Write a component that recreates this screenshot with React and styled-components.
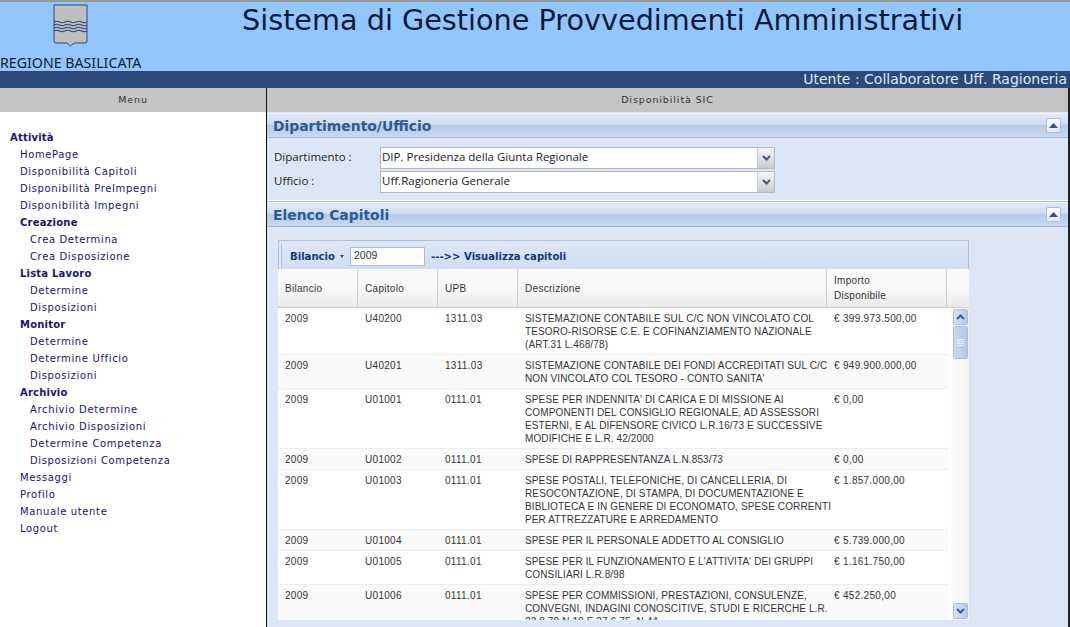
import React from 'react';
import styled, { createGlobalStyle } from 'styled-components';

const GlobalStyle = createGlobalStyle`
  html, body {
    margin: 0;
    padding: 0;
    height: 100%;
    overflow: hidden;
    background: #ffffff;
  }

  #root {
    height: 100%;
  }
`;

const Page = styled.div`
  display: flex;
  flex-direction: column;
  width: 1070px;
  height: 627px;
  overflow: hidden;
  font-family: "DejaVu Sans", sans-serif;
`;

const Banner = styled.header`
  display: flex;
  height: 71px;
  flex: none;
  box-sizing: border-box;
  border-top: 2px solid #9a9a94;
  background: #93c6ff;
`;

const Brand = styled.div`
  display: flex;
  flex-direction: column;
  width: 142px;
  flex: none;
  padding-top: 2px;
`;

const CrestSlot = styled.div`
  height: 44px;
  padding-left: 53px;
`;

const BrandName = styled.div`
  margin-top: 7px;
  font-family: "Noto Sans", sans-serif;
  font-size: 14.2px;
  line-height: 16px;
  white-space: nowrap;
  color: #101a2c;
`;

const Title = styled.h1`
  margin: 0;
  padding: 2px 0 0 100px;
  font-size: 28.7px;
  line-height: 33px;
  font-weight: 400;
  white-space: nowrap;
  color: #0c1a33;
`;

const UserBar = styled.div`
  height: 17px;
  flex: none;
  padding-right: 3px;
  background: #2a4a7c;
  color: #dfe9f7;
  font-size: 14px;
  line-height: 17px;
  text-align: right;
  white-space: nowrap;
`;

const Columns = styled.div`
  display: flex;
  flex: 1;
  min-height: 0;
`;

const Sidebar = styled.aside`
  display: flex;
  flex-direction: column;
  width: 266px;
  flex: none;
  border-right: 1px solid #111111;
`;

const ColumnTitle = styled.div`
  height: 24px;
  flex: none;
  background: #c4c4c4;
  color: #333333;
  font-size: 9.5px;
  letter-spacing: 0.9px;
  line-height: 24px;
  text-align: center;
`;

const MenuList = styled.nav`
  display: flex;
  flex-direction: column;
  padding-top: 17px;
`;

const MenuItem = styled.a`
  height: 17px;
  padding-left: ${({ $level }) => 10 + $level * 10}px;
  color: #1c1273;
  font-size: 10px;
  font-weight: ${({ $bold }) => ($bold ? 700 : 400)};
  letter-spacing: ${({ $bold }) => ($bold ? 0.2 : 0.64)}px;
  line-height: 17px;
  white-space: nowrap;
`;

const Main = styled.main`
  display: flex;
  flex-direction: column;
  flex: 1;
  min-width: 0;
  box-sizing: border-box;
  border-right: 2px solid #222222;
  background: #dde6f6;
`;

const PanelHeader = styled.div`
  display: flex;
  align-items: center;
  justify-content: space-between;
  height: 25px;
  flex: none;
  margin-top: ${({ $first }) => ($first ? '1px' : '0')};
  padding: 0 7px 0 6px;
  box-sizing: border-box;
  border-top: 1px solid #f2f6fc;
  border-bottom: 1px solid #a3b9da;
  background: linear-gradient(#e0e9f7 0, #d0ddf1 45%, #b6cbe9 48%, #c8d8ef 100%);
`;

const PanelTitle = styled.div`
  color: #2f5a94;
  font-size: 13.9px;
  font-weight: 700;
  white-space: nowrap;
`;

const CollapseButton = styled.button`
  display: flex;
  align-items: center;
  justify-content: center;
  width: 15px;
  height: 15px;
  padding: 0;
  border: 1px solid #a9bedd;
  border-radius: 2px;
  background: linear-gradient(#ffffff, #dfe8f6);
`;

const FormBody = styled.div`
  display: flex;
  flex-direction: column;
  gap: 2px;
  height: 63px;
  flex: none;
  padding: 9px 0 0 7px;
  box-sizing: border-box;
  border-bottom: 1px solid #ffffff;
  box-shadow: 0 1px 0 #a9bedd;
  margin-bottom: 1px;
`;

const FormRow = styled.div`
  display: flex;
  align-items: center;
  height: 22px;
`;

const FieldLabel = styled.label`
  width: 106px;
  flex: none;
  padding-bottom: 4px;
  color: #222222;
  font-family: "Open Sans", sans-serif;
  font-size: 11.5px;
`;

const Combo = styled.div`
  display: flex;
  width: 395px;
  height: 100%;
  box-sizing: border-box;
  border: 1px solid #b4b8be;
  background: #ffffff;
`;

const ComboValue = styled.div`
  flex: 1;
  padding-left: 1px;
  color: #222222;
  font-family: "Open Sans", sans-serif;
  font-size: 11.5px;
  line-height: 18px;
  white-space: nowrap;
`;

const ComboArrow = styled.div`
  display: flex;
  align-items: center;
  justify-content: center;
  width: 16px;
  border-left: 1px solid #c5cbd4;
  background: linear-gradient(#f4f5f7, #c8ccc8);
`;

const GridPanelBody = styled.div`
  flex: 1;
  min-height: 0;
  padding: 13px 0 0 11px;
`;

const Grid = styled.section`
  display: flex;
  flex-direction: column;
  width: 691px;
  height: 380px;
`;

const ToolbarFrame = styled.div`
  height: 29px;
  flex: none;
  padding: 3px 0 0 2px;
  box-sizing: border-box;
  border: 1px solid #a9c0e0;
  border-bottom: 0;
`;

const Toolbar = styled.div`
  display: flex;
  align-items: center;
  height: 25px;
  padding-left: 8px;
  box-sizing: border-box;
  border-left: 1px solid #a9c0e0;
  background: linear-gradient(#dbe6f7, #cfdef3);
  color: #15367f;
  font-size: 10.1px;
  font-weight: 700;
  white-space: nowrap;
`;

const ToolbarCaret = styled.span`
  margin: 0 6px 0 5px;
  border-top: 3px solid #444444;
  border-left: 2.500px solid transparent;
  border-right: 2.500px solid transparent;
`;

const YearInput = styled.div`
  width: 75px;
  height: 19px;
  margin-right: 6px;
  padding-left: 3px;
  box-sizing: border-box;
  border: 1px solid #a9bedd;
  background: #ffffff;
  color: #333333;
  font-family: "Liberation Sans", sans-serif;
  font-size: 10.5px;
  font-weight: 400;
  line-height: 15px;
`;

const HeadRow = styled.div`
  display: flex;
  height: 39px;
  flex: none;
  box-sizing: border-box;
  border-bottom: 1px solid #cfcfcf;
  background: linear-gradient(#f9f9f9 0, #f9f9f9 50%, #e9e9e9 100%);
`;

const HeadCell = styled.div`
  display: flex;
  align-items: center;
  width: ${({ $width }) => $width}px;
  flex: none;
  padding: 0 6px 0 7px;
  box-sizing: border-box;
  border-right: 1px solid #d0d0d0;
  color: #333333;
  font-family: "Liberation Sans", sans-serif;
  font-size: 10px;
  letter-spacing: 0.3px;
  line-height: 15px;
`;

const HeadFiller = styled.div`
  flex: 1;
`;

const GridBody = styled.div`
  display: flex;
  flex: 1;
  min-height: 0;
  background: #ffffff;
`;

const RowsViewport = styled.div`
  width: 670px;
  flex: none;
  overflow: hidden;
`;

const Row = styled.div`
  display: flex;
  border-bottom: 1px solid #ededed;
  background: ${({ $alt }) => ($alt ? '#fafafa' : '#ffffff')};
`;

const Cell = styled.div`
  width: ${({ $width }) => $width}px;
  flex: none;
  padding: 4px 0 3px 7px;
  box-sizing: border-box;
  color: #333333;
  font-family: "Liberation Sans", sans-serif;
  font-size: 10px;
  letter-spacing: ${({ $spacing }) => $spacing}px;
  line-height: 13px;
  white-space: nowrap;
`;

const ScrollTrack = styled.div`
  display: flex;
  flex-direction: column;
  align-items: flex-end;
  flex: 1;
  padding: 1px 1px 1px 0;
  background: linear-gradient(90deg, #ffffff, #f4f4ee);
`;

const ScrollButton = styled.div`
  display: flex;
  align-items: center;
  justify-content: center;
  width: 15px;
  height: 16px;
  flex: none;
  box-sizing: border-box;
  border: 1px solid #a9bedd;
  border-radius: 2px;
  background: linear-gradient(90deg, #d6e2f6, #b4c8ea);
`;

const ScrollThumb = styled.div`
  display: flex;
  flex-direction: column;
  align-items: center;
  justify-content: center;
  gap: 1px;
  width: 15px;
  height: 33px;
  flex: none;
  margin-top: 1px;
  box-sizing: border-box;
  border: 1px solid #a9bedd;
  border-radius: 2px;
  background: linear-gradient(90deg, #c9d8f3, #b4c8ea);
`;

const ThumbLine = styled.span`
  width: 7px;
  height: 1px;
  background: #e8effa;
`;

const ScrollSpacer = styled.div`
  flex: 1;
`;

const menu = [
  { label: 'Attività', level: 0, bold: true },
  { label: 'HomePage', level: 1 },
  { label: 'Disponibilità Capitoli', level: 1 },
  { label: 'Disponibilità PreImpegni', level: 1 },
  { label: 'Disponibilità Impegni', level: 1 },
  { label: 'Creazione', level: 1, bold: true },
  { label: 'Crea Determina', level: 2 },
  { label: 'Crea Disposizione', level: 2 },
  { label: 'Lista Lavoro', level: 1, bold: true },
  { label: 'Determine', level: 2 },
  { label: 'Disposizioni', level: 2 },
  { label: 'Monitor', level: 1, bold: true },
  { label: 'Determine', level: 2 },
  { label: 'Determine Ufficio', level: 2 },
  { label: 'Disposizioni', level: 2 },
  { label: 'Archivio', level: 1, bold: true },
  { label: 'Archivio Determine', level: 2 },
  { label: 'Archivio Disposizioni', level: 2 },
  { label: 'Determine Competenza', level: 2 },
  { label: 'Disposizioni Competenza', level: 2 },
  { label: 'Messaggi', level: 1 },
  { label: 'Profilo', level: 1 },
  { label: 'Manuale utente', level: 1 },
  { label: 'Logout', level: 1 },
];

const widths = [80, 80, 80, 309, 120];

const rows = [
  ['U40200', '1311.03', ['SISTEMAZIONE CONTABILE SUL C/C NON VINCOLATO COL', 'TESORO-RISORSE C.E. E COFINANZIAMENTO NAZIONALE', '(ART.31 L.468/78)'], '€ 399.973.500,00'],
  ['U40201', '1311.03', ['SISTEMAZIONE CONTABILE DEI FONDI ACCREDITATI SUL C/C', "NON VINCOLATO COL TESORO - CONTO SANITA'"], '€ 949.900.000,00'],
  ['U01001', '0111.01', ["SPESE PER INDENNITA' DI CARICA E DI MISSIONE AI", 'COMPONENTI DEL CONSIGLIO REGIONALE, AD ASSESSORI', 'ESTERNI, E AL DIFENSORE CIVICO L.R.16/73 E SUCCESSIVE', 'MODIFICHE E L.R. 42/2000'], '€ 0,00'],
  ['U01002', '0111.01', ['SPESE DI RAPPRESENTANZA L.N.853/73'], '€ 0,00'],
  ['U01003', '0111.01', ['SPESE POSTALI, TELEFONICHE, DI CANCELLERIA, DI', 'RESOCONTAZIONE, DI STAMPA, DI DOCUMENTAZIONE E', 'BIBLIOTECA E IN GENERE DI ECONOMATO, SPESE CORRENTI', 'PER ATTREZZATURE E ARREDAMENTO'], '€ 1.857.000,00'],
  ['U01004', '0111.01', ['SPESE PER IL PERSONALE ADDETTO AL CONSIGLIO'], '€ 5.739.000,00'],
  ['U01005', '0111.01', ["SPESE PER IL FUNZIONAMENTO E L'ATTIVITA' DEI GRUPPI", 'CONSILIARI L.R.8/98'], '€ 1.161.750,00'],
  ['U01006', '0111.01', ['SPESE PER COMMISSIONI, PRESTAZIONI, CONSULENZE,', 'CONVEGNI, INDAGINI CONOSCITIVE, STUDI E RICERCHE L.R.', '22.8.79 N.18 E 27.6.75, N.44'], '€ 452.250,00'],
];

function Crest() {
  return (
    <svg width="36" height="44" viewBox="0 0 36 44">
      <path d="M1 1h33v36q0 2-2 2H21l-3.500 3-3.500-3H3q-2 0-2-2z" fill="#bcbec0" stroke="#2d4a78" strokeWidth="1" />
      {[18, 21, 24, 27].map((y) => (
        <path
          key={y}
          d={`M1 ${y}q2.700-1.500 5.500 0t5.500 0 5.500 0 5.500 0 5.500 0 5.500 0`}
          fill="none"
          stroke="#2d4a78"
          strokeWidth="1.100"
        />
      ))}
    </svg>
  );
}

function Chevron({ up, color = '#3a5da0' }) {
  return (
    <svg width="9" height="6" viewBox="0 0 9 6">
      <path d={up ? 'M1 5l3.500-3.500L8 5' : 'M1 1l3.500 3.500L8 1'} fill="none" stroke={color} strokeWidth="2" />
    </svg>
  );
}

function PanelBar({ title, first }) {
  return (
    <PanelHeader $first={first}>
      <PanelTitle>{title}</PanelTitle>
      <CollapseButton type="button" aria-label="Comprimi">
        <svg width="9" height="5" viewBox="0 0 9 5">
          <path d="M4.500 0L9 5H0z" fill="#34508c" />
        </svg>
      </CollapseButton>
    </PanelHeader>
  );
}

function Combobox({ value }) {
  return (
    <Combo>
      <ComboValue>{value}</ComboValue>
      <ComboArrow>
        <Chevron color="#41537c" />
      </ComboArrow>
    </Combo>
  );
}

export default function App() {
  return (
    <Page>
      <GlobalStyle />
      <Banner>
        <Brand>
          <CrestSlot>
            <Crest />
          </CrestSlot>
          <BrandName>REGIONE BASILICATA</BrandName>
        </Brand>
        <Title>Sistema di Gestione Provvedimenti Amministrativi</Title>
      </Banner>
      <UserBar>Utente : Collaboratore Uff. Ragioneria</UserBar>
      <Columns>
        <Sidebar>
          <ColumnTitle>Menu</ColumnTitle>
          <MenuList>
            {menu.map((item, i) => (
              <MenuItem key={i} $level={item.level} $bold={item.bold}>
                {item.label}
              </MenuItem>
            ))}
          </MenuList>
        </Sidebar>
        <Main>
          <ColumnTitle>Disponibilità SIC</ColumnTitle>
          <PanelBar title="Dipartimento/Ufficio" first />
          <FormBody>
            <FormRow>
              <FieldLabel>Dipartimento :</FieldLabel>
              <Combobox value="DIP. Presidenza della Giunta Regionale" />
            </FormRow>
            <FormRow>
              <FieldLabel>Ufficio :</FieldLabel>
              <Combobox value="Uff.Ragioneria Generale" />
            </FormRow>
          </FormBody>
          <PanelBar title="Elenco Capitoli" />
          <GridPanelBody>
            <Grid>
              <ToolbarFrame>
                <Toolbar>
                  Bilancio
                  <ToolbarCaret />
                  <YearInput>2009</YearInput>
                  ---&gt;&gt; Visualizza capitoli
                </Toolbar>
              </ToolbarFrame>
              <HeadRow>
                <HeadCell $width={widths[0]}>Bilancio</HeadCell>
                <HeadCell $width={widths[1]}>Capitolo</HeadCell>
                <HeadCell $width={widths[2]}>UPB</HeadCell>
                <HeadCell $width={widths[3]}>Descrizione</HeadCell>
                <HeadCell $width={widths[4]}>
                  Importo
                  <br />
                  Disponibile
                </HeadCell>
                <HeadFiller />
              </HeadRow>
              <GridBody>
                <RowsViewport>
                  {rows.map(([code, upb, desc, amount], i) => (
                    <Row key={code} $alt={i % 2 === 1}>
                      <Cell $width={widths[0]} $spacing={0.3}>2009</Cell>
                      <Cell $width={widths[1]} $spacing={0.3}>{code}</Cell>
                      <Cell $width={widths[2]} $spacing={0.3}>{upb}</Cell>
                      <Cell $width={widths[3]} $spacing={0.125}>
                        {desc.map((line) => (
                          <div key={line}>{line}</div>
                        ))}
                      </Cell>
                      <Cell $width={widths[4]} $spacing={0.3}>{amount}</Cell>
                    </Row>
                  ))}
                </RowsViewport>
                <ScrollTrack>
                  <ScrollButton>
                    <Chevron up />
                  </ScrollButton>
                  <ScrollThumb>
                    <ThumbLine />
                    <ThumbLine />
                    <ThumbLine />
                    <ThumbLine />
                  </ScrollThumb>
                  <ScrollSpacer />
                  <ScrollButton>
                    <Chevron />
                  </ScrollButton>
                </ScrollTrack>
              </GridBody>
            </Grid>
          </GridPanelBody>
        </Main>
      </Columns>
    </Page>
  );
}
